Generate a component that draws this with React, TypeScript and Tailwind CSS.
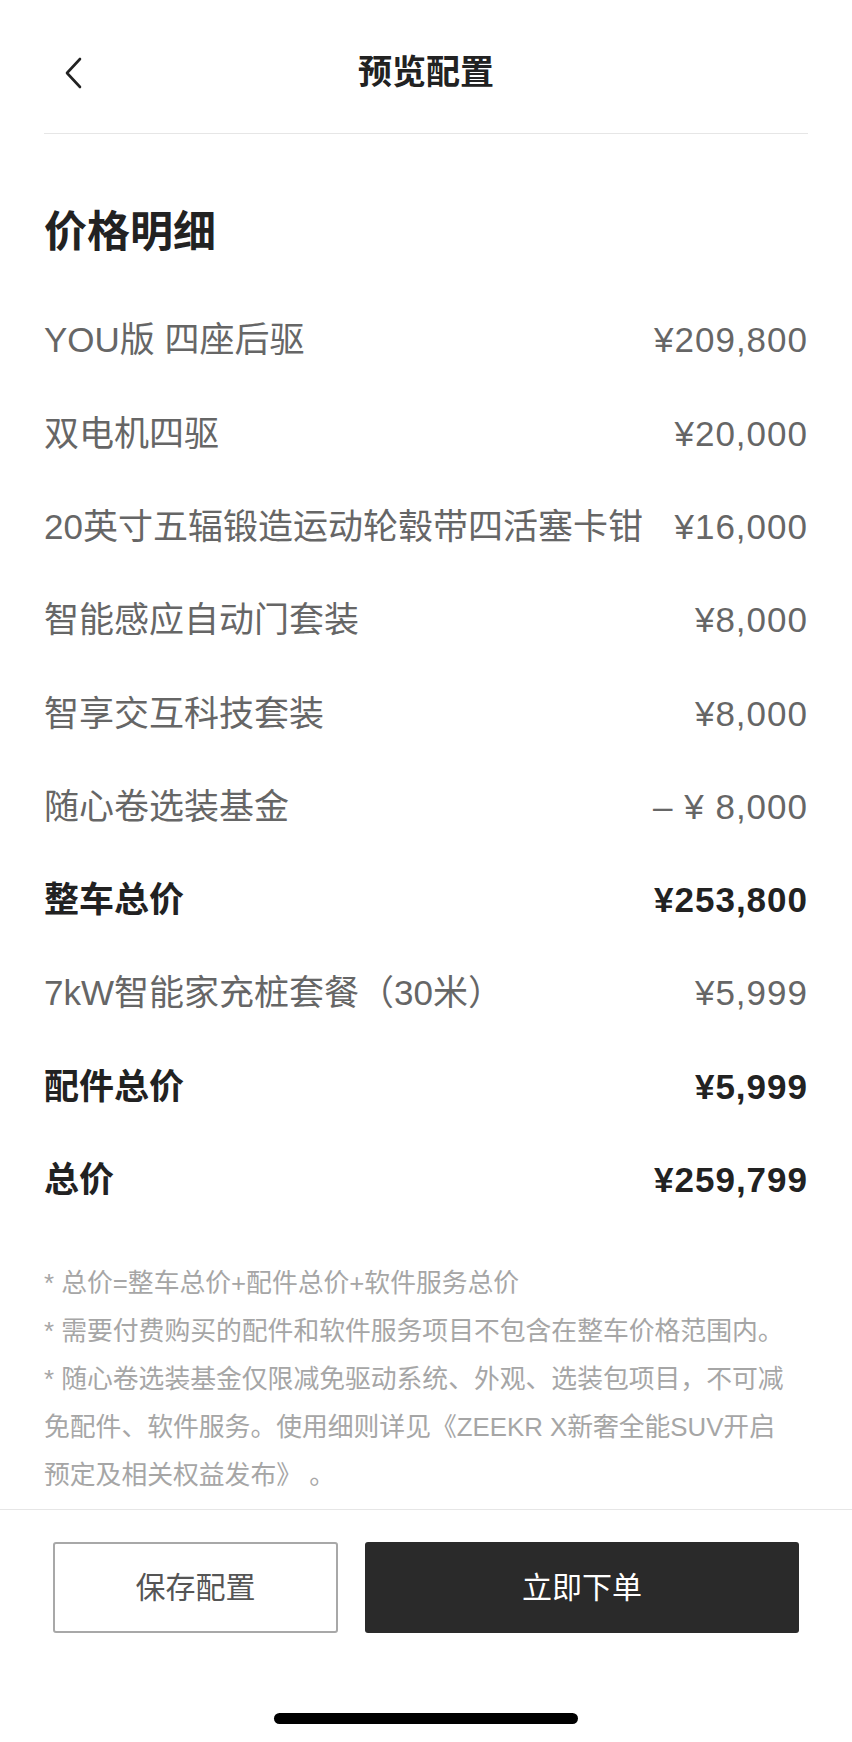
const rows = [
  { label: "YOU版 四座后驱", price: "¥209,800" },
  { label: "双电机四驱", price: "¥20,000" },
  { label: "20英寸五辐锻造运动轮毂带四活塞卡钳", price: "¥16,000" },
  { label: "智能感应自动门套装", price: "¥8,000" },
  { label: "智享交互科技套装", price: "¥8,000" },
  { label: "随心卷选装基金", price: "– ¥ 8,000" },
  { label: "整车总价", price: "¥253,800", bold: true },
  { label: "7kW智能家充桩套餐（30米）", price: "¥5,999" },
  { label: "配件总价", price: "¥5,999", bold: true },
  { label: "总价", price: "¥259,799", bold: true },
];

function PriceRow({ label, price, bold }: { label: string; price: string; bold?: boolean }) {
  return (
    <div
      className={
        "flex h-[93.3px] items-center justify-between text-[35px] " +
        (bold ? "font-bold text-[#222]" : "text-[#666]")
      }
    >
      <span>{label}</span>
      <span className="tracking-[1px]">{price}</span>
    </div>
  );
}

export default function App() {
  return (
    <div
      className="flex h-[1742px] w-[852px] flex-col bg-white"
      style={{ fontFamily: '"Liberation Sans", "Noto Sans CJK SC", sans-serif' }}
    >
      <header className="mx-[44px] flex h-[134px] items-center border-b border-[#e6e6e6] pt-3">
        <div className="flex w-[80px] items-center pl-[20px]">
          <svg width="20" height="32" viewBox="0 0 20 32" fill="none">
            <polyline
              points="16,2 3,16 16,30"
              stroke="#222"
              strokeWidth="2.6"
              strokeLinecap="round"
              strokeLinejoin="round"
            />
          </svg>
        </div>
        <h1 className="flex-1 text-center text-[34px] font-bold text-[#222]">预览配置</h1>
        <div className="w-[80px]" />
      </header>

      <main className="px-[44px]">
        <h2 className="mt-[73px] text-[43px] leading-[50px] font-bold text-[#222]">价格明细</h2>
        <div className="mt-[37px]">
          {rows.map((r) => (
            <PriceRow key={r.label + r.price} {...r} />
          ))}
        </div>
        <div className="mt-[32px] text-[25.8px] leading-[48px] text-[#a6a6a6]">
          <p>* 总价=整车总价+配件总价+软件服务总价</p>
          <p>* 需要付费购买的配件和软件服务项目不包含在整车价格范围内。</p>
          <p>
            * 随心卷选装基金仅限减免驱动系统、外观、选装包项目，不可减
            <br />
            免配件、软件服务。使用细则详见《ZEEKR X新奢全能SUV开启
            <br />
            预定及相关权益发布》 。
          </p>
        </div>
      </main>

      <div className="mt-[10px] border-t border-[#e6e6e6]" />

      <footer className="flex gap-[27px] px-[53px] pt-[32px]">
        <button className="flex h-[91px] w-[285px] items-center justify-center rounded-[3px] border-2 border-[#a8a8a8] text-[30px] text-[#555]">
          保存配置
        </button>
        <button className="flex h-[91px] flex-1 items-center justify-center rounded-[3px] bg-[#2a2a2a] text-[30px] text-white">
          立即下单
        </button>
      </footer>

      <div className="mx-auto mt-[80px] h-[11px] w-[304px] rounded-full bg-black" />
    </div>
  );
}
